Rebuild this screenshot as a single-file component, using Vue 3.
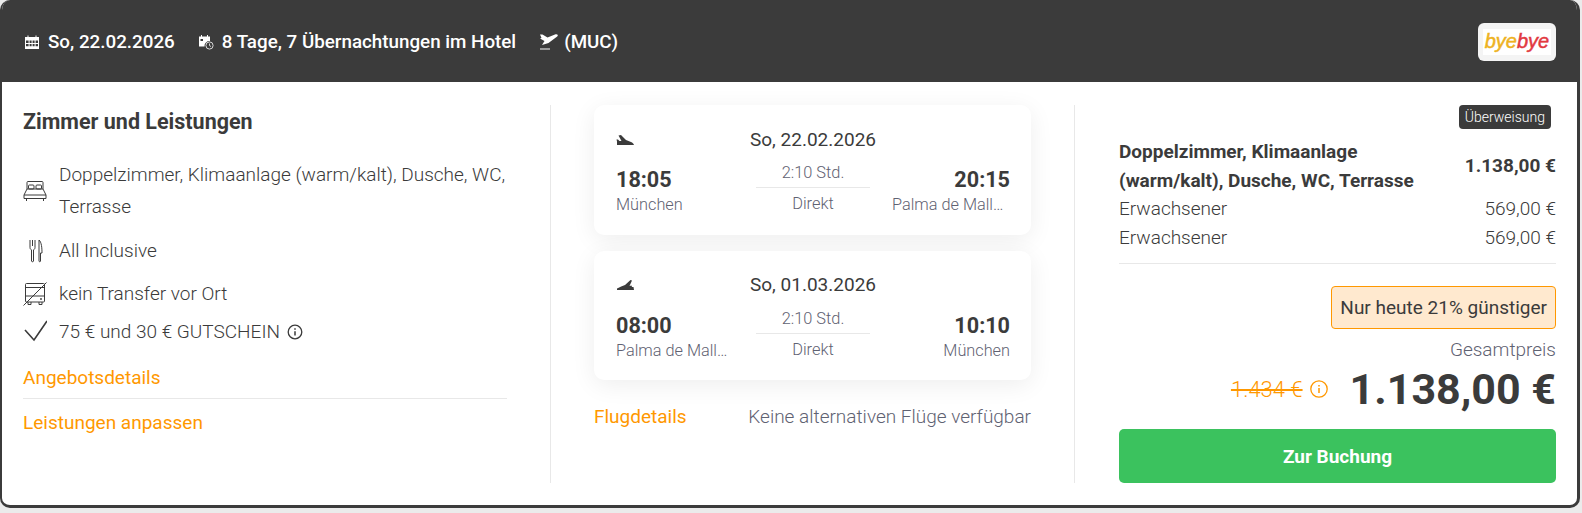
<script setup>
const flights = [
  { id: 'out', date: 'So, 22.02.2026', from: '18:05', fromCity: 'München', to: '20:15', toCity: 'Palma de Mallorca', landing: false },
  { id: 'back', date: 'So, 01.03.2026', from: '08:00', fromCity: 'Palma de Mallorca', to: '10:10', toCity: 'München', landing: true }
]
</script>

<template>
  <div class="card">
    <header class="head">
      <div class="head-item">
        <svg class="head-icon" viewBox="0 0 16 16" width="16" height="16">
          <path fill="#fff" fill-rule="evenodd" d="M1 3h2.500V1.500h1V3h7V1.500h1V3H15v12H1zM2 6.500V9h2.600V6.500zM5.600 6.500V9h2V6.500zM8.600 6.500V9h2V6.500zM11.600 6.500V9H14V6.500zM2 10v2.200h2.600V10zM5.600 10v2.200h2V10zM8.600 10v2.200h2V10zM11.600 10v2.200H14V10z"/>
        </svg>
        <span>So, 22.02.2026</span>
      </div>
      <div class="head-item">
        <svg class="head-icon" viewBox="0 0 16 16" width="16" height="16">
          <path fill="#fff" d="M1 2.500h2V1h1v1.500h5V1h1v1.500h2V7a5 5 0 0 0-5.500 5.500H1zM2.500 5v2H5V5z"/>
          <circle cx="11.500" cy="11.500" r="3.600" fill="none" stroke="#d8d8d8" stroke-width="1"/>
          <path d="M11.500 9.500v2.200l1.500.8" fill="none" stroke="#d8d8d8" stroke-width="1"/>
        </svg>
        <span>8 Tage, 7 Übernachtungen im Hotel</span>
      </div>
      <div class="head-item head-item-plane">
        <svg viewBox="0 0 20 18" width="20" height="18">
          <path fill="#fff" d="M1 1.500h2.500L8.500 4.500l7.500-3c2.800-.8 3.500 1.200 2.200 2L9.500 10 3 12l2.500-4L1 5.500l1.500-.5z"/>
          <rect x="1" y="15" width="10" height="2" fill="#9a9a9a"/>
        </svg>
        <span>(MUC)</span>
      </div>
      <div class="logo">
        <div class="logo-inner"><span class="bye-a">bye</span><span class="bye-b">bye</span></div>
      </div>
    </header>

    <div class="body">
      <section class="col col-left">
        <h2>Zimmer und Leistungen</h2>

        <div class="service">
          <svg viewBox="0 0 24 22" width="24" height="22" fill="none" stroke="#3b3b3b" stroke-width="1">
            <path d="M4 9V2.500c0-.8.500-1 1-1h14c.5 0 1 .2 1 1V9"/>
            <rect x="5.500" y="5" width="5.500" height="4" rx="1"/>
            <rect x="13" y="5" width="5.500" height="4" rx="1"/>
            <path d="M4 9h16l3 6v3.500H1V15zM1 15h22M3.500 18.500V21M20.500 18.500V21"/>
          </svg>
          <span>Doppelzimmer, Klimaanlage (warm/kalt), Dusche, WC, Terrasse</span>
        </div>

        <div class="service service-food">
          <svg viewBox="0 0 24 24" width="24" height="24" fill="none" stroke="#3b3b3b" stroke-width="1">
            <path d="M7 1v7.500c0 1.200.6 2 1.500 2.400V22c0 1 2 1 2 0V10.900c.9-.4 1.500-1.200 1.500-2.400V1M9.500 1v6"/>
            <path d="M16 1c2.500 2 3 8 3 13h-1.500v8c0 1-1.500 1-1.500 0z"/>
          </svg>
          <span>All Inclusive</span>
        </div>

        <div class="service service-tight">
          <svg viewBox="0 0 24 24" width="24" height="24" fill="none" stroke="#3b3b3b" stroke-width="1">
            <rect x="2.500" y="1.500" width="19" height="18.500" rx="1"/>
            <path d="M2.500 5.500h19M2.500 14h19M5 20v2.500h3V20M16 20v2.500h3V20M23.500 0.500 .5 23.500"/>
            <circle cx="18" cy="17" r=".6"/>
          </svg>
          <span>kein Transfer vor Ort</span>
        </div>

        <div class="service service-check">
          <svg viewBox="0 0 24 24" width="24" height="24" fill="none" stroke="#3b3b3b" stroke-width="1.600">
            <path d="m2 10 9 10L24 1"/>
          </svg>
          <span>75 € und 30 € GUTSCHEIN</span>
          <svg class="info" viewBox="0 0 16 16" width="16" height="16" fill="none" stroke="#3b3b3b" stroke-width="1.300">
            <circle cx="8" cy="8" r="6.800"/>
            <path d="M8 7.200V11.500M8 4.200v1.500" stroke-width="1.500"/>
          </svg>
        </div>

        <a class="link link-first">Angebotsdetails</a>
        <a class="link link-second">Leistungen anpassen</a>
      </section>

      <section class="col col-mid">
        <div v-for="f in flights" :key="f.id" class="flight" :class="{ 'flight-back': f.landing }">
          <div class="flight-top">
            <svg viewBox="0 0 18 11" width="18" height="11">
              <path v-if="!f.landing" fill="#3b3b3b" d="M2.500.5 5 0l5 5 5 2c1.500.6 2.500 1.500 3 3H1V6.500L.5 4.500H2L3.500 6h2z"/>
              <path v-else fill="#3b3b3b" d="M1 10V8.500C4 7 6.500 6 9 5l5.500-5L16 .5 13.500 6l2-.5L16 7h1.500l.5 3z"/>
            </svg>
            <span class="flight-date">{{ f.date }}</span>
          </div>
          <div class="flight-row">
            <div class="end">
              <div class="time">{{ f.from }}</div>
              <div class="city">{{ f.fromCity }}</div>
            </div>
            <div class="mid">
              <div class="dur">2:10 Std.</div>
              <div class="direct">Direkt</div>
            </div>
            <div class="end end-right">
              <div class="time">{{ f.to }}</div>
              <div class="city">{{ f.toCity }}</div>
            </div>
          </div>
        </div>
        <div class="flight-links">
          <a class="link">Flugdetails</a>
          <span class="muted">Keine alternativen Flüge verfügbar</span>
        </div>
      </section>

      <section class="col col-right">
        <div class="tag-row"><span class="tag">Überweisung</span></div>
        <div class="line line-bold">
          <span class="line-name">Doppelzimmer, Klimaanlage (warm/kalt), Dusche, WC, Terrasse</span>
          <span>1.138,00 €</span>
        </div>
        <div class="line"><span>Erwachsener</span><span>569,00 €</span></div>
        <div class="line"><span>Erwachsener</span><span>569,00 €</span></div>
        <div class="sep"></div>
        <div class="promo-row"><span class="promo">Nur heute 21% günstiger</span></div>
        <div class="total-label">Gesamtpreis</div>
        <div class="total">
          <span class="old">1.434 €</span>
          <svg class="old-info" viewBox="0 0 18 18" width="18" height="18" fill="none" stroke="#ff9800" stroke-width="1.300">
            <circle cx="9" cy="9" r="8.200"/>
            <path d="M9 8v5M9 5v1.500" stroke-width="1.500"/>
          </svg>
          <span class="price">1.138,00 €</span>
        </div>
        <button class="book">Zur Buchung</button>
      </section>
    </div>
  </div>
</template>

<style>
html, body {
  background: #ebebeb;
}
</style>

<style scoped>
.card {
  width: 1580px;
  height: 508px;
  box-sizing: border-box;
  background: #fff;
  border: solid #3b3b3b;
  border-width: 0 3px 3px 2px;
  border-radius: 10px;
  overflow: hidden;
  font-family: Roboto, "Liberation Sans", sans-serif;
  font-size: 19px;
  color: #3b3b3b;
}
.head {
  height: 82px;
  box-sizing: border-box;
  background: #3b3b3b;
  color: #fff;
  display: flex;
  align-items: center;
  padding: 2px 21px 0 22px;
  gap: 23px;
  font-size: 18.8px;
  font-weight: 500;
}
.head-item {
  display: flex;
  align-items: center;
  gap: 8px;
}
.head-item-plane {
  gap: 5px;
}
.logo {
  margin-left: auto;
  width: 78px;
  height: 38px;
  box-sizing: border-box;
  background: #f4f4f4;
  border-radius: 6px;
  padding: 6px 5px;
}
.logo-inner {
  height: 26px;
  background: #fff;
  text-align: center;
  font-family: "Liberation Sans", sans-serif;
  font-style: italic;
  font-size: 20px;
  font-weight: 400;
  line-height: 25px;
  -webkit-text-stroke: 0.5px;
}
.bye-a {
  color: #eeb21e;
}
.bye-b {
  color: #e2393f;
}
.body {
  display: flex;
  padding-top: 23px;
}
.col {
  height: 378px;
  box-sizing: border-box;
}
.col-left {
  width: 549px;
  padding: 0 43px 0 21px;
  border-right: 1px solid #e8e8e8;
}
h2 {
  margin: 0 0 21px;
  font-size: 21.5px;
  font-weight: 700;
  line-height: 33px;
}
.service {
  display: flex;
  align-items: center;
  gap: 12px;
  font-weight: 300;
  line-height: 32px;
  margin-bottom: 12px;
}
.service svg:first-child {
  flex: none;
}
.service-food {
  margin-bottom: 11px;
}
.service-tight {
  margin-bottom: 6px;
}
.service-check {
  margin-bottom: 10px;
}
.info {
  margin-left: -5px;
}
.link {
  color: #ff9800;
  display: block;
}
.link-first {
  line-height: 40px;
  border-bottom: 1px solid #e8e8e8;
}
.link-second {
  line-height: 48px;
}
.col-mid {
  width: 524px;
  padding: 0 43px;
  border-right: 1px solid #e8e8e8;
}
.flight {
  height: 130px;
  box-sizing: border-box;
  border-radius: 10px;
  background: #fff;
  box-shadow: 0 5px 24px rgba(0, 0, 0, 0.07);
  padding: 22px 21px 0 22px;
  margin-bottom: 16px;
}
.flight-back {
  height: 129px;
  padding-top: 21px;
}
.flight-back .flight-row {
  margin-top: 6px;
}
.flight-top {
  height: 26px;
  display: flex;
  align-items: center;
  position: relative;
}
.flight-date {
  position: absolute;
  left: 134px;
  line-height: 26px;
}
.flight-row {
  display: flex;
  margin-top: 5px;
}
.end {
  width: 118px;
  font-weight: 300;
}
.end-right {
  text-align: right;
  margin-left: auto;
}
.time {
  font-size: 21.6px;
  font-weight: 700;
  line-height: 28px;
  margin-top: 8px;
}
.city {
  font-size: 16.3px;
  line-height: 20px;
  margin-top: 1px;
  color: #5f6272;
  white-space: nowrap;
  overflow: hidden;
  text-overflow: ellipsis;
}
.mid {
  width: 114px;
  margin-left: 22px;
  text-align: center;
  font-size: 16.4px;
  font-weight: 300;
  color: #5f6272;
}
.dur {
  line-height: 29px;
  border-bottom: 1px solid #e8e8e8;
}
.direct {
  line-height: 31px;
}
.flight-links {
  display: flex;
  justify-content: space-between;
  padding-top: 3px;
  line-height: 36px;
}
.muted {
  font-weight: 300;
  color: #5f6272;
}
.col-right {
  flex: 1;
  padding: 0 21px 0 44px;
}
.tag-row {
  display: flex;
  justify-content: flex-end;
  height: 33px;
  padding-right: 5px;
}
.tag {
  height: 24px;
  line-height: 24px;
  box-sizing: border-box;
  padding: 0 6px;
  background: #3b3b3b;
  color: #fff;
  border-radius: 4px;
  font-size: 14px;
  font-weight: 300;
}
.line {
  display: flex;
  justify-content: space-between;
  align-items: center;
  font-weight: 300;
  line-height: 28.5px;
}
.line-bold {
  font-weight: 700;
}
.line-name {
  width: 310px;
}
.sep {
  border-top: 1px solid #e8e8e8;
  margin-top: 11px;
}
.promo-row {
  display: flex;
  justify-content: flex-end;
  margin-top: 22px;
}
.promo {
  height: 43px;
  line-height: 41px;
  box-sizing: border-box;
  padding: 0 8px;
  background: #ffe9cf;
  border: 1px solid #ff9800;
  border-radius: 4px;
}
.total-label {
  text-align: right;
  font-weight: 300;
  color: #5f6272;
  line-height: 24px;
  margin-top: 9px;
}
.total {
  display: flex;
  justify-content: flex-end;
  align-items: center;
  height: 50px;
  margin-top: 2px;
}
.old {
  color: #ff9800;
  font-size: 22px;
  font-weight: 300;
  text-decoration: line-through;
  text-decoration-thickness: 2px;
}
.old-info {
  margin-left: 7px;
  margin-right: 22px;
}
.price {
  font-size: 43px;
  font-weight: 700;
  line-height: 50px;
}
.book {
  display: block;
  width: 100%;
  height: 54px;
  margin-top: 15px;
  border: 0;
  border-radius: 5px;
  background: #3bc25e;
  color: #fff;
  font: 700 19px Roboto, "Liberation Sans", sans-serif;
}
</style>
